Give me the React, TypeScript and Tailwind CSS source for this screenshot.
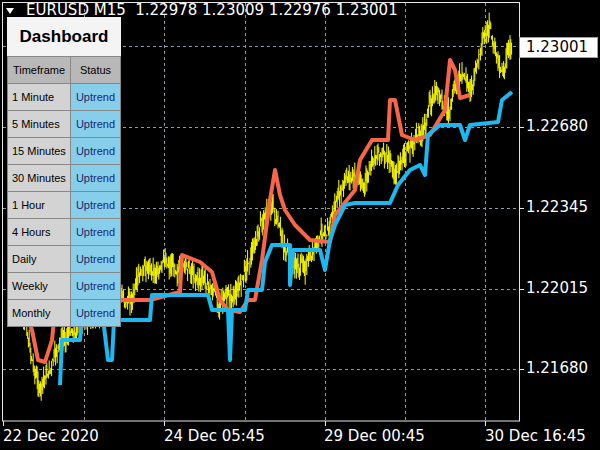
import React from "react";

function interp(pts: number[][], x: number) {
  for (let i = 0; i < pts.length - 1; i++) {
    const [x0, y0] = pts[i], [x1, y1] = pts[i + 1];
    if (x >= x0 && x <= x1) return y0 + ((y1 - y0) * (x - x0)) / (x1 - x0 || 1);
  }
  return pts[pts.length - 1][1];
}

const yellowPts = [[18,300],[30,350],[40,390],[55,360],[70,330],[90,320],[110,310],[130,300],[150,270],[175,262],[200,275],[220,300],[235,300],[250,255],[262,225],[272,200],[282,245],[295,270],[310,262],[322,240],[335,205],[350,180],[365,185],[380,150],[395,175],[410,150],[425,125],[435,90],[450,110],[460,80],[470,90],[480,55],[490,40],[500,70],[512,48]];

function yellowPath() {
  let seed = 7;
  const rnd = () => { seed = (seed * 9301 + 49297) % 233280; return seed / 233280; };
  let d = "";
  let drift = 0;
  for (let x = 18; x <= 512; x += 0.8) {
    drift = drift * 0.9 + (rnd() - 0.5) * 8;
    const m = interp(yellowPts, x) + drift;
    const a = m - rnd() * 14;
    const b = m + rnd() * 14;
    d += `M${x.toFixed(1)} ${a.toFixed(1)}L${x.toFixed(1)} ${b.toFixed(1)}`;
  }
  return d;
}
const yd = yellowPath();

const blue = "60,385 62,340 80,340 82,315 100,315 102,310 108,360 112,360 114,320 150,320 152,295 180,295 208,295 212,310 228,310 230,360 232,310 245,310 248,290 262,290 265,262 272,245 290,245 290,285 293,250 320,250 325,270 330,240 335,225 345,205 355,203 390,203 398,185 410,170 420,165 425,175 428,135 440,125 460,125 465,140 470,125 498,122 502,100 512,92";
const red = "20,300 32,330 38,360 45,362 52,340 56,300 65,290 80,300 95,305 105,295 120,300 150,300 180,292 182,255 200,262 212,272 220,300 228,310 240,312 248,300 255,300 262,260 270,200 275,170 280,195 285,210 295,225 310,240 330,242 335,215 355,190 360,160 372,140 388,140 390,100 395,100 402,135 415,140 430,135 445,110 450,60 455,70 460,98 470,95";

const rows = ["1 Minute","5 Minutes","15 Minutes","30 Minutes","1 Hour","4 Hours","Daily","Weekly","Monthly"];

export default function App() {
  return (
    <div className="relative w-[600px] h-[450px] bg-black overflow-hidden" style={{ fontFamily: "Tahoma, 'DejaVu Sans', sans-serif" }}>
      <svg className="absolute left-0 top-0" width="600" height="450">
        <g stroke="#8a9aa8" strokeDasharray="3 3" strokeWidth="1">
          {[84,164,245,325,405,485].map(x => <line key={x} x1={x+0.5} y1={3} x2={x+0.5} y2={421} />)}
          {[127,208,289,369].map(y => <line key={y} x1={3} y1={y+0.5} x2={519} y2={y+0.5} />)}
        </g>
        <line x1={3} y1={46.5} x2={519} y2={46.5} stroke="#8a9aa8" strokeDasharray="3 3" />
        <rect x={2.5} y={2.5} width={517} height={418.5} fill="none" stroke="#e5e5e5" />
        {[3,164,325,485].map(x => <line key={x} x1={x+0.5} y1={421} x2={x+0.5} y2={426} stroke="#e5e5e5" />)}
        {[127,208,289,369,46].map(y => <line key={y} x1={519} y1={y+0.5} x2={524} y2={y+0.5} stroke="#e5e5e5" />)}
        <path d={yd} stroke="#ffff00" strokeWidth="1" fill="none" />
        <polyline points={red} stroke="#f8664a" strokeWidth="4" fill="none" strokeLinejoin="round" />
        <polyline points={blue} stroke="#1cb8f0" strokeWidth="4" fill="none" strokeLinejoin="round" />
        <polygon points="6,8 14,8 10,14" fill="white" />
      </svg>
      <div className="absolute left-[26px] top-[3px] text-white text-[15px] leading-none whitespace-pre">EURUSD M15  1.22978 1.23009 1.22976 1.23001</div>
      <div className="absolute left-[519px] top-[37px] w-[79px] h-[21px] bg-white text-black text-[15px] flex items-center pl-[6px] border border-gray-400">1.23001</div>
      {[["1.22680",127],["1.22345",208],["1.22015",289],["1.21680",369]].map(([t,y]) => (
        <div key={t as string} className="absolute left-[526px] text-white text-[15px] leading-none" style={{ top: (y as number) - 8 }}>{t}</div>
      ))}
      {[["22 Dec 2020",3],["24 Dec 05:45",164],["29 Dec 00:45",324],["30 Dec 16:45",485]].map(([t,x]) => (
        <div key={t as string} className="absolute top-[429px] text-white text-[15px] leading-none" style={{ left: x as number }}>{t}</div>
      ))}
      <div className="absolute left-[7px] top-[17px] w-[114px] flex flex-col text-[11px] text-black whitespace-nowrap" style={{ fontFamily: "'Liberation Sans', Arial, sans-serif" }}>
        <div className="h-[39px] bg-[#f4f4f4] flex items-center justify-center text-[17px] font-bold">Dashboard</div>
        <div className="flex h-[28px] border border-[#888]">
          <div className="w-[63px] bg-[#b8b8b8] flex items-center justify-center border-r border-[#888]">Timeframe</div>
          <div className="flex-1 bg-[#b8b8b8] flex items-center justify-center">Status</div>
        </div>
        {rows.map(r => (
          <div key={r} className="flex h-[27px] border border-t-0 border-[#888]">
            <div className="w-[63px] bg-[#d3d3d3] flex items-center pl-[4px] border-r border-[#888]">{r}</div>
            <div className="flex-1 bg-[#87ceeb] flex items-center justify-center text-[#1a2a6a]">Uptrend</div>
          </div>
        ))}
      </div>
    </div>
  );
}
